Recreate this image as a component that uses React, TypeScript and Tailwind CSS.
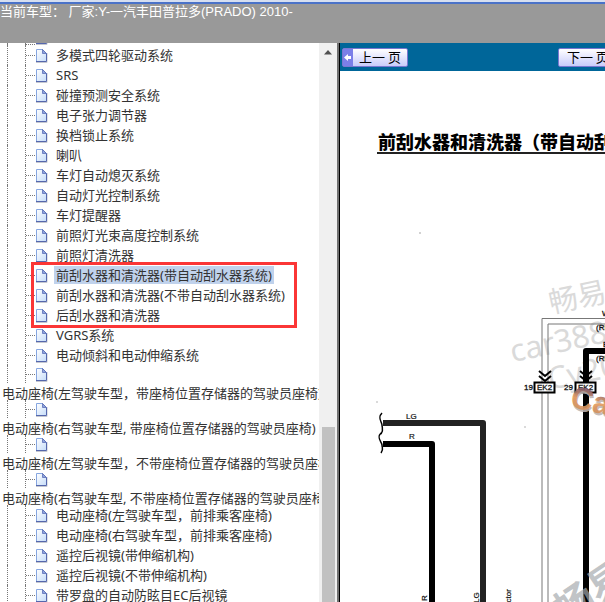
import React from 'react';

const PageIcon = () => (
  <svg className="mt-px h-[15px] w-[13px] shrink-0" viewBox="0 0 13 15" fill="none">
    <defs>
      <linearGradient id="sheet" x1="0" y1="0" x2="1" y2="1">
        <stop offset="0" stopColor="#ffffff" />
        <stop offset="1" stopColor="#c5dcf9" />
      </linearGradient>
    </defs>
    <path d="M1 14.5h11V5" stroke="#c4c7d0" />
    <path d="M1.5 1.500h6l4 4v8h-10z" fill="url(#sheet)" />
    <path d="M1.500 13.500v-12h6" stroke="#86a6e0" />
    <path d="M7.500 1.500l4 4v8H1" stroke="#5567ad" />
    <path d="M7.500 1.500v4h4z" fill="#8ea3dc" stroke="#5d70b8" strokeWidth=".8" />
  </svg>
);

// Dotted guide lines that lead to each leaf of the tree
const Guides = () => (
  <>
    <span className="ml-[7px] w-[18px] self-stretch border-l border-dotted border-[#777]" />
    <span className="flex w-[10px] items-center self-stretch border-l border-dotted border-[#777]">
      <span className="mt-px w-full border-t border-dotted border-[#777]" />
    </span>
  </>
);

interface LeafProps {
  label: string;
  active?: boolean;
}

const Leaf = ({ label, active }: LeafProps) => (
  <li className="flex h-5 items-center">
    <Guides />
    <PageIcon />
    <a
      href="#"
      className={`ml-1.5 px-0.5 leading-[18px] whitespace-nowrap ${active ? 'bg-[#c0d2ec]' : ''}`}
    >
      {label}
    </a>
  </li>
);

// Labels too long for the row drop to the line below their icon
const LongLeaf = ({ label }: LeafProps) => (
  <li>
    <div className="flex h-[18px] items-center">
      <Guides />
      <PageIcon />
    </div>
    <a href="#" className="block h-[17px] pl-0.5 leading-[21px] whitespace-nowrap">
      {label}
    </a>
  </li>
);

const before = [
  '多模式四轮驱动系统',
  'SRS',
  '碰撞预测安全系统',
  '电子张力调节器',
  '换档锁止系统',
  '喇叭',
  '车灯自动熄灭系统',
  '自动灯光控制系统',
  '车灯提醒器',
  '前照灯光束高度控制系统',
  '前照灯清洗器',
];

const marked = ['前刮水器和清洗器(带自动刮水器系统)', '前刮水器和清洗器(不带自动刮水器系统)', '后刮水器和清洗器'];

const between = ['VGRS系统', '电动倾斜和电动伸缩系统'];

const long = [
  '电动座椅(左驾驶车型，带座椅位置存储器的驾驶员座椅)',
  '电动座椅(右驾驶车型, 带座椅位置存储器的驾驶员座椅)',
  '电动座椅(左驾驶车型，不带座椅位置存储器的驾驶员座椅)',
  '电动座椅(右驾驶车型, 不带座椅位置存储器的驾驶员座椅)',
];

const after = [
  '电动座椅(左驾驶车型，前排乘客座椅)',
  '电动座椅(右驾驶车型，前排乘客座椅)',
  '遥控后视镜(带伸缩机构)',
  '遥控后视镜(不带伸缩机构)',
  '带罗盘的自动防眩目EC后视镜',
];

const Tree = () => (
  <nav className="w-[319px] shrink-0 overflow-hidden bg-white font-['Noto_Sans','Noto_Sans_CJK_SC',sans-serif] text-[13px] text-[#333]">
    <div className="flex h-[2px] items-end overflow-hidden">
      <Guides />
      <PageIcon />
    </div>
    <ul>
      {before.map((label) => (
        <Leaf key={label} label={label} />
      ))}
    </ul>
    <div className="relative">
      <ul>
        {marked.map((label, i) => (
          <Leaf key={label} label={label} active={i === 0} />
        ))}
      </ul>
      <div className="pointer-events-none absolute -top-[3px] left-[31px] h-[66px] w-[266px] border-3 border-[#fb3636]" />
    </div>
    <ul>
      {between.map((label) => (
        <Leaf key={label} label={label} />
      ))}
      {long.map((label) => (
        <LongLeaf key={label} label={label} />
      ))}
      {after.map((label) => (
        <Leaf key={label} label={label} />
      ))}
    </ul>
  </nav>
);

const Scrollbar = () => (
  <div className="flex w-[18px] shrink-0 flex-col items-center bg-[#f0f0f0]">
    <svg className="mt-[6px] h-[6px] w-[8px]" viewBox="0 0 8 6">
      <path d="M0 5.500L4 1l4 4.500z" fill="#505050" />
    </svg>
    <div className="mt-[372px] w-[13px] grow bg-[#c1c1c1]" />
  </div>
);

const Diagram = () => (
  <svg
    className="block h-[448px] w-[265px] font-['Liberation_Sans',sans-serif]"
    viewBox="340 154 265 448"
    fill="none"
  >
    <defs>
      <linearGradient id="logo" x1="0" y1="0" x2="0" y2="1">
        <stop offset="0.2" stopColor="#7d5566" />
        <stop offset="0.5" stopColor="#e39a5c" />
        <stop offset="1" stopColor="#c98a5e" />
      </linearGradient>
    </defs>

    {/* Watermark */}
    <g
      fill="#dadada"
      className="font-['Noto_Sans','Noto_Sans_CJK_SC',sans-serif]"
      transform="rotate(-12 552 312)"
    >
      <text x="551" y="313" fontSize="29">畅易汽车</text>
      <text x="503" y="353" fontSize="31">car388.com</text>
      <text x="534" y="388" fontSize="31">Cy2008</text>
    </g>

    {/* Left harness */}
    <path d="M383 423h100v179" stroke="#222" strokeWidth="6" strokeLinejoin="round" />
    <path d="M383 444h49v158" stroke="#000" strokeWidth="6" strokeLinejoin="round" />
    <path
      d="M382 413c-5 5 0 9 0 12s2 5-1 9M381 433c-5 5 1 9 1 12s2 4-1 8"
      stroke="#000"
      strokeWidth="1.500"
    />
    <g fill="#111" stroke="#111" strokeWidth=".2" fontSize="8">
      <text x="406" y="419">LG</text>
      <text x="409" y="439">R</text>
      <text x="427" y="601" transform="rotate(-90 427 601)">R</text>
      <text x="479" y="603" transform="rotate(-90 479 603)">LG</text>
      <text x="511" y="626" transform="rotate(-90 511 626)">Conductor</text>
    </g>

    {/* Right harness */}
    <path d="M605 318.500h-63v284M605 324h-57v278" stroke="#777" />
    <path d="M605 351h-19v251" stroke="#000" strokeWidth="6" strokeLinejoin="round" />
    <path
      d="M539 371l6 5 6-5M539 376l6 5 6-5M580 371l6 5 6-5M580 376l6 5 6-5"
      stroke="#000"
      strokeWidth="2"
    />
    <path d="M534.500 382.500h20v10h-20zM575.500 382.500h20v10h-20z" fill="#fff" stroke="#000" strokeWidth="2" />
    <g fill="#111" stroke="#111" strokeWidth=".3" fontSize="8">
      <text x="524" y="390">19</text>
      <text x="564" y="390">29</text>
      <text x="537" y="390">EK2</text>
      <text x="578" y="390">EK2</text>
      <text x="602" y="316">W</text>
      <text x="596" y="330">(RHD)</text>
      <text x="603" y="347">B</text>
      <text x="596" y="361">(RHD)</text>
    </g>

    {/* Scan specks */}
    <g fill="#999">
      <circle cx="393" cy="123" r="1" />
      <circle cx="420" cy="233" r=".8" />
      <circle cx="377" cy="402" r=".7" />
      <circle cx="525" cy="427" r=".7" />
    </g>

    <g fontWeight="bold" fontSize="31" fillOpacity=".9">
      <text x="572" y="412" fill="#bdb3b0" transform="rotate(12 585 400)">Ca</text>
      <text x="571" y="410" fill="url(#logo)" transform="rotate(12 585 400)">Ca</text>
    </g>
    <text
      x="566"
      y="627"
      fontSize="40"
      fontWeight="bold"
      fill="#a5aaae"
      fillOpacity=".7"
      transform="rotate(-34 566 627)"
      className="font-['Noto_Sans_CJK_SC',sans-serif]"
    >
      畅易
    </text>
  </svg>
);

const App = () => (
  <div className="flex h-screen flex-col overflow-hidden bg-white">
    <header className="h-[43px] shrink-0 bg-[#999] font-['Liberation_Sans','Noto_Sans_CJK_SC',sans-serif] text-[13px] text-white">
      <div className="h-1 border-b-2 border-[#4a72c8] bg-[#d6dff0]" />
      <p className="leading-4 whitespace-nowrap">当前车型： 厂家:Y-一汽丰田普拉多(PRADO) 2010-</p>
    </header>

    <div className="flex min-h-0 grow">
      <Tree />
      <Scrollbar />
      <div className="w-[3px] shrink-0 border-r border-black bg-[#707070]" />

      <main className="min-w-0 grow overflow-hidden bg-white">
        <div className="flex h-7 items-center gap-[150px] bg-[#006699] px-0.5 font-['Noto_Sans_CJK_SC',sans-serif] text-[13px] text-black">
          <button className="flex h-[19px] shrink-0 items-center gap-1.5 rounded-xs border border-[#7a78d0] bg-linear-to-b from-white to-[#c9ccfa] pr-1.5">
            <span className="flex h-full w-[10px] items-center bg-[#7b7fe8]">
              <svg className="h-[9px] w-[9px]" viewBox="0 0 9 9">
                <path d="M1 4.500L5 1v2h3v3H5v2z" fill="#fff" />
              </svg>
            </span>
            上一 页
          </button>
          <button className="flex h-[19px] shrink-0 items-center rounded-xs border border-[#7a78d0] bg-linear-to-b from-white to-[#c9ccfa] px-2">
            下一 页
          </button>
        </div>
        <h1 className="mt-[58px] ml-[37px] h-[25px] overflow-hidden border-b-2 border-[#222] pl-px font-['Noto_Sans_CJK_SC',sans-serif] text-[18px] leading-6 font-black whitespace-nowrap text-black">
          前刮水器和清洗器（带自动刮水器系统）
        </h1>
        <Diagram />
      </main>
    </div>
  </div>
);

export default App;
